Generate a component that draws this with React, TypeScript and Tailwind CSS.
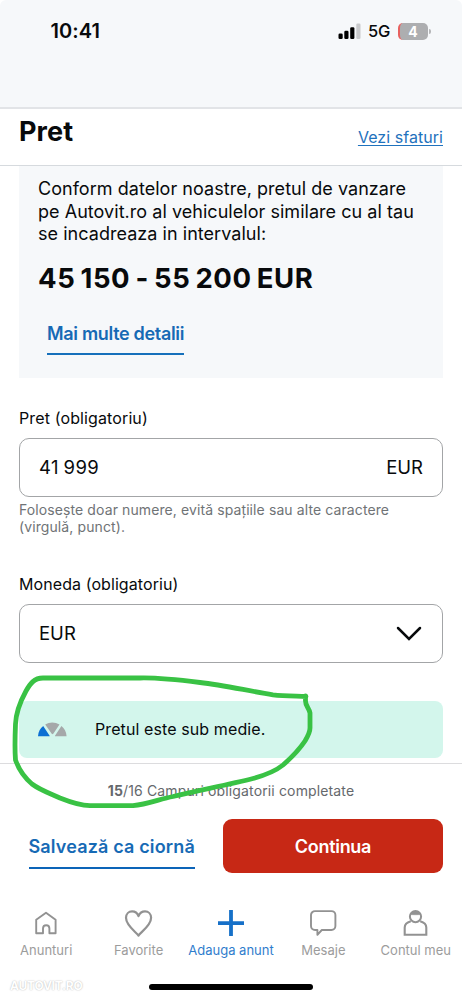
import type { ReactNode } from 'react';

const tabs = [
    { label: 'Anunturi', icon: 'home' },
    { label: 'Favorite', icon: 'heart' },
    { label: 'Adauga anunt', icon: 'plus' },
    { label: 'Mesaje', icon: 'chat' },
    { label: 'Contul meu', icon: 'user' },
];

const icons: Record<string, ReactNode> = {
    home: <path d="M5.2 25.2V11.8L15 4.8l9.6 7v13.4h-6.2v-4.6c0-2.1-1.3-3.3-3.2-3.3s-3.2 1.2-3.2 3.3v4.6z" strokeWidth="1.9" />,
    heart: <path d="M14.5 27.5C12 24 2 17.6 2 9.8c0-3.8 2.7-6.4 6.1-6.4 3 0 5.3 1.8 6.4 4.7 1.2-2.9 3.5-4.7 6.5-4.7 3.4 0 6.1 2.6 6.1 6.4 0 7.8-10.1 14.2-12.6 17.7z" strokeWidth="2.2" />,
    plus: <path d="M15 2v26M2 15.2h26" strokeWidth="3.8" />,
    chat: <path d="M7 3.1h16.4a4 4 0 0 1 4 4V18a4 4 0 0 1-4 4h-9.6l-4.4 4.8V22H7a4 4 0 0 1-4-4V7.1a4 4 0 0 1 4-4z" strokeWidth="1.9" />,
    user: (
        <>
            <circle cx="14.5" cy="8.6" r="5.6" strokeWidth="2" />
            <path d="M9.5 6.5c2.5.3 7.5.3 10 0l-2-3h-6z" fill="currentColor" strokeWidth="0.6" />
            <path d="M9.8 13.3c-3.5 1-6.1 2.9-6.1 6.2v7.2h21.6v-7.2c0-3.3-2.6-5.2-6.1-6.2" strokeWidth="2.1" strokeLinejoin="miter" />
        </>
    ),
};

function StatusBar() {
    return (
        <div className="flex h-[109px] items-start justify-between rounded-t-[6px] border-b-2 border-[#e2e4e7] bg-[#f6f8fa] pt-[19px] pr-[31px] pl-[50.5px]">
            <span className="text-[20px] leading-6 font-semibold tracking-[0.1px]">10:41</span>
            <div className="flex h-6 items-center">
                <svg width="24" height="16" viewBox="0 0 24 16" className="mr-[7px]">
                    <rect x="1.5" y="10.5" width="4.2" height="5.5" rx="1.3" fill="#000" />
                    <rect x="7.3" y="7.8" width="4.2" height="8.2" rx="1.3" fill="#000" />
                    <rect x="13.2" y="4.3" width="4.2" height="11.7" rx="1.3" fill="#000" />
                    <rect x="19.3" y="0.5" width="4.2" height="15.5" rx="1.3" fill="#c9cacc" />
                </svg>
                <span className="text-[16.5px] leading-6 font-medium tracking-[-0.3px]">5G</span>
                <div className="ml-2 flex h-[17px] w-[30px] items-center justify-center overflow-hidden rounded-[5px] border-l-2 border-[#e8615f] bg-[#adaeb0]">
                    <span className="mr-[2px] text-[14px] font-bold text-white">4</span>
                </div>
                <div className="ml-px h-[5px] w-[2px] rounded-r-full bg-[#b5b6b8]" />
            </div>
        </div>
    );
}

function PriceGauge() {
    return (
        <svg width="30" height="15" viewBox="0 0 30 15">
            <path d="M0 14.3C.3 9.8 2.2 6.3 5.2 4.1l6.4 9.6c.2.3 0 .6-.4.6z" fill="#0b6fd3" />
            <path d="M7.2 2.5C11.5-.2 17-.2 21.5 2.5l-6.2 9.3c-.4.6-1.2.6-1.6 0z" fill="#a5a8a9" />
            <path d="M28.6 14.3c-.3-4.5-2.2-8-5.2-10.2L17 13.7c-.2.3 0 .6.4.6z" fill="#a5a8a9" />
        </svg>
    );
}

export default function App() {
    return (
        <div className="relative flex h-[1000px] w-[462px] flex-col overflow-hidden bg-white font-['Inter',sans-serif] text-[#080a0c]">
            <StatusBar />

            <header className="flex h-[57px] shrink-0 justify-between border-b border-[#d6dade] px-[19px]">
                <h1 className="pt-[7px] text-[27px] leading-8 font-bold tracking-[0.1px]">Pret</h1>
                <a className="pt-[16px] text-[16px] leading-6 tracking-[0.05px] text-[#1f72bd] underline underline-offset-[2px]">Vezi sfaturi</a>
            </header>

            <main className="flex h-[597px] shrink-0 flex-col px-[19px]">
                <section className="flex h-[212px] shrink-0 flex-col items-start bg-[#f6f8fa] pt-[12px] pl-[19px]">
                    <p className="text-[18px] leading-[22.5px] tracking-[0.04px] whitespace-nowrap">
                        Conform datelor noastre, pretul de vanzare<br />
                        pe Autovit.ro al vehiculelor similare cu al tau<br />
                        se incadreaza in intervalul:
                    </p>
                    <p className="mt-[16.5px] text-[27.5px] leading-8 font-bold tracking-[0.6px] whitespace-nowrap [word-spacing:-2px]">45 150 - 55 200 EUR</p>
                    <button className="mt-[27px] ml-[9px] h-[34px] border-b-2 border-[#1670bb] text-[18px] leading-6 font-semibold tracking-[-0.32px] whitespace-nowrap text-[#166ab5]">
                        <span className="block h-[31px]">Mai multe detalii</span>
                    </button>
                </section>

                <label className="mt-[30px] text-[16px] leading-5 tracking-[0.12px]">Pret (obligatoriu)</label>
                <div className="mt-[10px] flex h-[59px] shrink-0 items-center justify-between rounded-[10px] border border-[#a3a5a7] px-[19px] text-[18.5px]">
                    <span className="tracking-[0.4px] [word-spacing:-1px]">41 999</span>
                    <span>EUR</span>
                </div>
                <p className="mt-[5px] h-[34px] text-[14px] leading-[16.5px] tracking-[0.1px] whitespace-nowrap text-[#6f7376]">
                    Folosește doar numere, evită spațiile sau alte caractere<br />
                    (virgulă, punct).
                </p>

                <label className="mt-[38px] text-[16px] leading-5 tracking-[0.08px]">Moneda (obligatoriu)</label>
                <div className="mt-[10px] flex h-[59px] shrink-0 items-center justify-between rounded-[10px] border border-[#a3a5a7] pr-[20px] pl-[19px] text-[18.5px]">
                    <span>EUR</span>
                    <svg width="26" height="16" viewBox="0 0 26 16" fill="none" stroke="#080a0c" strokeWidth="2.5" strokeLinecap="round">
                        <path d="M2 2l11 11L24 2" />
                    </svg>
                </div>

                <div className="mt-[38px] flex h-[57px] shrink-0 items-center rounded-[8px] bg-[#d3f6ec] pl-[19px]">
                    <PriceGauge />
                    <span className="mb-[2px] ml-[27px] text-[16px] tracking-[0.1px] whitespace-nowrap">Pretul este sub medie.</span>
                </div>
            </main>

            <footer className="flex h-[237px] shrink-0 flex-col border-t border-[#dcdcde]">
                <p className="mt-[17px] text-center text-[14px] leading-5 tracking-[0.14px] text-[#65686c]">
                    <b>15</b>/16 Campuri obligatorii completate
                </p>
                <div className="mt-[18px] flex h-[54px] shrink-0 justify-between pr-[19px] pl-[28.5px]">
                    <button className="mt-[16px] h-[34px] border-b-2 border-[#0c64b8] text-[18px] leading-6 font-semibold tracking-[0.15px] whitespace-nowrap text-[#166ab5]">
                        <span className="block h-[32px]">Salvează ca ciornă</span>
                    </button>
                    <button className="w-[220px] rounded-[9px] bg-[#c72815] text-[18px] font-semibold tracking-[-0.3px] text-white">Continua</button>
                </div>
                <nav className="mt-[35px] grid shrink-0 grid-cols-5">
                    {tabs.map(tab => (
                        <div
                            key={tab.label}
                            className={`flex flex-col items-center ${tab.icon === 'plus' ? 'text-[#1670c8]' : 'text-[#929292]'}`}
                        >
                            <svg width="30" height="30" viewBox="0 0 30 30" fill="none" stroke="currentColor" strokeLinejoin="round">
                                {icons[tab.icon]}
                            </svg>
                            <span className="mt-[3px] text-[13px] leading-[18px] whitespace-nowrap opacity-90">{tab.label}</span>
                        </div>
                    ))}
                </nav>
                <div className="mt-[16px] flex items-end pl-[10px]">
                    <span className="w-[139px] text-[12px] leading-[22px] font-bold tracking-[-0.25px] text-white [text-shadow:0_0_1.5px_#a8a8a8]">AUTOVIT.RO</span>
                    <div className="mb-[7px] h-[6px] w-[164px] rounded-full bg-black" />
                </div>
            </footer>

            {/* hand-drawn marker over the price verdict */}
            <svg className="pointer-events-none absolute inset-0" width="462" height="1000" fill="none" stroke="#39c244" strokeWidth="4.8" strokeLinecap="round" strokeLinejoin="round">
                <path d="M306 696.5C295 696 284 696 273 694.8C248 691 224 685 200 682.5C180 680 160 677.5 140 678H43C34 678 30 684 26 691C20 702 16 713 15.5 724C15 736 14.5 748 15.5 760C19 770 25 778 32 784C40 790 50 793.5 60 798C70 802 80 805.5 90 805.7H133C147 804.5 160 799 173 796.5C200 790 227 785 253 778.5C264 775.5 275 771.5 283 765C291 758 299 750 305 741C308 736 310 732 310 728V713C309 708 305.5 706 305.5 701V696" />
            </svg>
        </div>
    );
}
